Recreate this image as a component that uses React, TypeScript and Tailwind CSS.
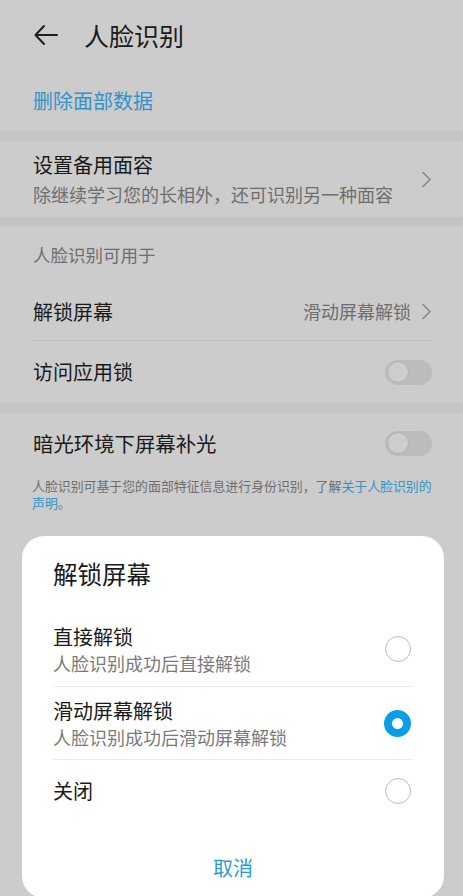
import React from "react";

const font = { fontFamily: '"Noto Sans CJK SC", "Noto Sans", sans-serif' };

function Chevron() {
  return (
    <svg width="11" height="17" viewBox="0 0 11 17" fill="none">
      <path d="M2 1.5 L9 8.5 L2 15.5" stroke="#858585" strokeWidth="1.5" strokeLinecap="round" strokeLinejoin="round" />
    </svg>
  );
}

function Toggle() {
  return (
    <div className="w-[47px] h-[25px] rounded-full bg-[#bcbcbc] flex items-center pl-[2px]">
      <div className="w-[22px] h-[22px] rounded-full bg-[#cdcdcd] border border-[#b2b2b2]" />
    </div>
  );
}

function Radio({ checked }: { checked?: boolean }) {
  if (checked) {
    return (
      <div className="w-[27px] h-[27px] mr-[2px] rounded-full border-[8px] border-[#0a9ee8] bg-white" />
    );
  }
  return <div className="w-[26px] h-[26px] mr-[2px] rounded-full border-[1.5px] border-[#bdbdbd] bg-white" />;
}

export default function App() {
  return (
    <div className="relative w-full h-[896px] overflow-hidden bg-[#cccccc] text-[#1a1a1a]" style={font}>
      {/* Header */}
      <div className="h-[70px] flex items-center px-[33px] gap-[25px]">
        <svg width="26" height="22" viewBox="0 0 26 22" fill="none">
          <path d="M24 11 H3 M11 2 L2.5 11 L11 20" stroke="#1f1f1f" strokeWidth="2" strokeLinecap="round" strokeLinejoin="round" />
        </svg>
        <span className="text-[25px] leading-none">人脸识别</span>
      </div>

      <div className="h-[61px] flex items-center px-[33px]">
        <span className="text-[20px] text-[#3592c6]">删除面部数据</span>
      </div>

      <div className="h-[10px] bg-[#c4c4c4]" />

      <div className="h-[76px] flex items-center justify-between px-[33px] pr-[31px]">
        <div className="flex flex-col">
          <span className="text-[20px] leading-[26px]">设置备用面容</span>
          <span className="text-[18px] leading-[24px] text-[#6e6e6e] mt-[4px]">除继续学习您的长相外，还可识别另一种面容</span>
        </div>
        <Chevron />
      </div>

      <div className="h-[10px] bg-[#c4c4c4]" />

      <div className="h-[56px] flex items-center px-[33px]">
        <span className="text-[17.5px] text-[#6e6e6e]">人脸识别可用于</span>
      </div>

      <div className="h-[57px] flex items-center justify-between px-[33px] pr-[31px]">
        <span className="text-[20px]">解锁屏幕</span>
        <div className="flex items-center gap-[10px]">
          <span className="text-[18px] text-[#6e6e6e]">滑动屏幕解锁</span>
          <Chevron />
        </div>
      </div>
      <div className="h-px bg-[#bdbdbd] mx-[32px]" />

      <div className="h-[62px] flex items-center justify-between px-[33px] pr-[31px]">
        <span className="text-[20px]">访问应用锁</span>
        <Toggle />
      </div>

      <div className="h-[10px] bg-[#c4c4c4]" />

      <div className="h-[60px] flex items-center justify-between px-[33px] pr-[31px]">
        <span className="text-[20.4px]">暗光环境下屏幕补光</span>
        <Toggle />
      </div>

      <p className="pl-[32px] pr-[26px] pt-[4px] text-[12.9px] leading-[17px] text-[#6e6e6e]">
        人脸识别可基于您的面部特征信息进行身份识别，了解<span className="text-[#3592c6]">关于人脸识别的声明。</span>
      </p>

      {/* Bottom sheet */}
      <div className="absolute top-[536px] left-[22px] w-[422px] h-[362px] bg-white rounded-[22px] px-[31px]">
        <div className="h-[76px] flex items-center">
          <span className="text-[24.5px] text-[#1a1a1a]">解锁屏幕</span>
        </div>

        <div className="h-[74px] flex items-center justify-between">
          <div className="flex flex-col">
            <span className="text-[20px] leading-[26px] text-[#1a1a1a]">直接解锁</span>
            <span className="text-[18px] leading-[24px] text-[#7a7a7a] mt-[1px]">人脸识别成功后直接解锁</span>
          </div>
          <Radio />
        </div>
        <div className="h-px bg-[#ececec]" />

        <div className="h-[72px] flex items-center justify-between">
          <div className="flex flex-col">
            <span className="text-[20px] leading-[26px] text-[#1a1a1a]">滑动屏幕解锁</span>
            <span className="text-[18px] leading-[24px] text-[#7a7a7a] mt-[1px]">人脸识别成功后滑动屏幕解锁</span>
          </div>
          <Radio checked />
        </div>
        <div className="h-px bg-[#ececec]" />

        <div className="h-[62px] flex items-center justify-between">
          <span className="text-[20px] text-[#1a1a1a]">关闭</span>
          <Radio />
        </div>

        <div className="h-[92px] flex items-center justify-center">
          <span className="text-[20px] text-[#2b9ad6]">取消</span>
        </div>
      </div>
    </div>
  );
}
